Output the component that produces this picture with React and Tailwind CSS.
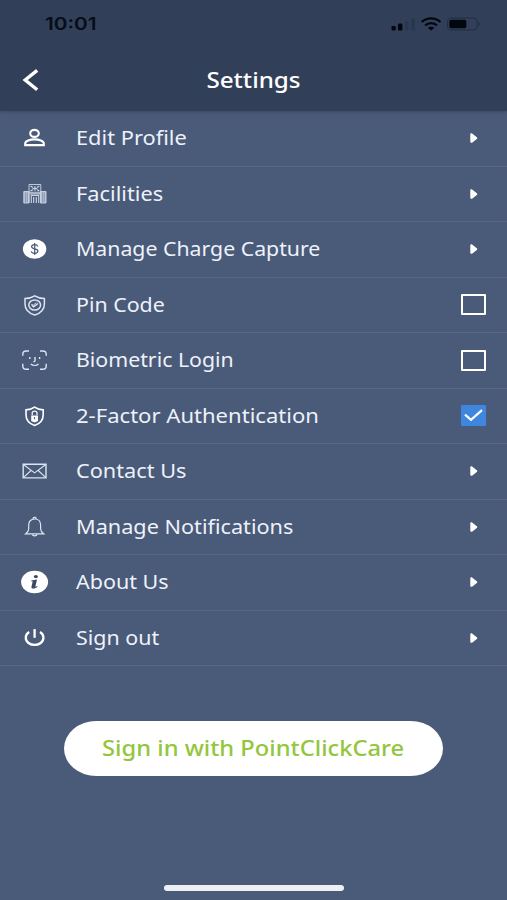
import { useState } from 'react'

const UserIcon = () => (
  <g strokeWidth="2.1">
    <ellipse cx="13.5" cy="7.4" rx="4.3" ry="3.5" />
    <path d="M4.2 19.1V17.5C4.2 14.9 9 13.4 13.5 13.4S22.8 14.9 22.8 17.5V19.1Z" />
  </g>
)

const HospitalIcon = () => (
  <g stroke="#cbd5e5" strokeWidth="0.9">
    <path d="M2.8 9.5H8V21H2.8ZM19.5 9.5H25V21H19.5Z" fill="#aeb9cc" />
    <path d="M8 21V2.5H19.8V21M8 10.3H19.8" />
    <path d="M9.5 4 12 5.5M18.3 4 15.8 5.5M9.5 9 12 7.5M18.3 9 15.8 7.5M13.9 4.2V8.8M11.6 6.5H16.2" strokeWidth="1.2" />
    <path d="M10.3 21V13.5H17.7V21M12.7 15V21M15.3 15V21M9 11.9H19" strokeWidth="1.1" />
    <path d="M4.5 10.5V20.5M6.3 10.5V20.5M21.5 10.5V20.5M23.3 10.5V20.5" stroke="#7d8aa5" strokeWidth="0.6" />
  </g>
)

const DollarIcon = () => (
  <g>
    <ellipse cx="13.6" cy="12" rx="11.7" ry="9.8" fill="#fff" stroke="none" />
    <path d="M16.7 9.5C16.4 8.3 15.2 7.7 13.7 7.7 11.9 7.7 10.6 8.5 10.6 9.8 10.6 12.6 16.9 11.3 16.9 14.1 16.9 15.5 15.5 16.3 13.7 16.3 11.9 16.3 10.6 15.6 10.3 14.3M13.7 6V18" stroke="#4a5a79" strokeWidth="1.2" />
  </g>
)

const ShieldCheckIcon = () => (
  <g stroke="#dce4f1" strokeWidth="1.5">
    <path d="M13.7 2.8C10.8 4.7 7.5 5.4 4 5.4V11C4 16.8 8 20.3 13.7 22 19.4 20.3 23.4 16.8 23.4 11V5.4C19.9 5.4 16.6 4.7 13.7 2.8Z" />
    <ellipse cx="13.7" cy="12" rx="5.9" ry="5.1" />
    <path d="M10.8 12.3 12.6 13.9 17 10.5" />
    <path d="M10.2 11.6 12.6 12 15.3 9.6" strokeWidth="0.9" />
  </g>
)

const FaceIcon = () => (
  <g stroke="#dce4f1" strokeWidth="1.4">
    <path d="M1.8 7.8V6.1C1.8 4 3.2 3 5.2 3H8M19 3H21.8C23.8 3 25.2 4 25.2 6.1V7.8M25.2 15.8V18C25.2 20.3 23.8 21.3 21.8 21.3H19M8 21.3H5.2C3.2 21.3 1.8 20.3 1.8 18V15.8" />
    <path d="M8.8 9V10.9M18.6 9V10.9M14 9V12.4C14 13.4 13.5 13.8 12.4 13.8M9.8 16C12 17.8 15.4 17.8 17.5 16" />
  </g>
)

const ShieldLockIcon = () => (
  <g strokeWidth="1.6">
    <path d="M13.6 3.2C11.2 5 8.2 5.8 5 5.9V10.7C5 16.1 8.4 19.7 13.6 21.4 18.8 19.7 22.2 16.1 22.2 10.7V5.9C19 5.8 16 5 13.6 3.2Z" />
    <path d="M11.2 11.2V9C11.2 6.4 16 6.4 16 9V11.2" strokeWidth="1.2" />
    <path d="M10.2 11.4H17V17L13.6 18.4 10.2 17Z" fill="#fff" stroke="none" />
    <path d="M13.6 13V15.3" stroke="#4a5a79" strokeWidth="1" />
  </g>
)

const MailIcon = () => (
  <g stroke="#dce4f1" strokeWidth="1.4">
    <path d="M2.2 5.3H25V18.9H2.2Z" />
    <path d="M2.4 5.5 13.6 13.9 24.8 5.5M2.4 18.7 10 11.5M24.8 18.7 17.2 11.5" strokeWidth="1.1" />
  </g>
)

const BellIcon = () => (
  <g stroke="#dce4f1" strokeWidth="1.2">
    <path d="M13.6 4C9.6 4 7.7 6.7 7.7 10V13.7C7.7 16 6.5 17.4 4.6 18.9H22.8C20.8 17.4 19.6 16 19.6 13.7V10C19.6 6.7 17.6 4 13.6 4Z" />
    <path d="M12.2 3.9V3.1C12.2 2 15 2 15 3.1V3.9M11.3 19.4C11.6 21.3 15.7 21.3 16 19.4" />
  </g>
)

const InfoIcon = () => (
  <g stroke="none">
    <ellipse cx="13.6" cy="12" rx="13.5" ry="11.3" fill="#fff" />
    <ellipse cx="14.9" cy="6.6" rx="2" ry="1.6" fill="#3b4865" />
    <path d="M10.3 10.4 16 9.6 14.4 16.2C14.2 17 15 16.8 16.2 15.9L16.6 16.7C14.5 18.6 9.7 19.7 10.5 16.4L11.7 11.5 10.2 11.3Z" fill="#3b4865" />
  </g>
)

const PowerIcon = () => (
  <g strokeWidth="2.3">
    <path d="M8.2 6C3.6 8.8 3.9 14.4 7.5 17 11 19.6 16.2 19.6 19.7 17 23.3 14.4 23.6 8.8 19 6" />
    <path d="M13.6 3.1V11.8" />
  </g>
)

const items = [
  { label: 'Edit Profile', icon: UserIcon, stretch: 'scale-x-[1.09]' },
  { label: 'Facilities', icon: HospitalIcon, stretch: 'scale-x-[1.09]' },
  { label: 'Manage Charge Capture', icon: DollarIcon, stretch: 'scale-x-[1.064]' },
  { label: 'Pin Code', icon: ShieldCheckIcon, stretch: 'scale-x-[1.067]', toggle: 'pin' },
  { label: 'Biometric Login', icon: FaceIcon, stretch: 'scale-x-[1.065]', toggle: 'biometric' },
  { label: '2-Factor Authentication', icon: ShieldLockIcon, stretch: 'scale-x-[1.103]', toggle: 'twoFactor' },
  { label: 'Contact Us', icon: MailIcon, stretch: 'scale-x-[1.085]' },
  { label: 'Manage Notifications', icon: BellIcon, stretch: 'scale-x-[1.083]' },
  { label: 'About Us', icon: InfoIcon, stretch: 'scale-x-[1.075]' },
  { label: 'Sign out', icon: PowerIcon, stretch: 'scale-x-[1.07]' },
]

function Checkbox({ checked, label, onChange }) {
  return (
    <button
      role="checkbox"
      aria-checked={checked}
      aria-label={label}
      onClick={onChange}
      className={`flex h-[21px] w-[25px] items-center justify-center rounded-[1px] ${
        checked ? 'bg-[#3f86e0]' : 'border-2 border-white'
      }`}
    >
      {checked && (
        <svg width="25" height="21" viewBox="0 0 25 21" fill="none" stroke="#fff" strokeWidth="2.2">
          <path d="M4 9.7 10 14.8 21 5.2" />
        </svg>
      )}
    </button>
  )
}

function StatusBar() {
  return (
    <div className="flex h-[47px] items-center justify-between pl-[45px] pr-[26px]">
      <span className="origin-left scale-x-[1.22] pt-px font-['Inter','Liberation_Sans',sans-serif] text-[17px] font-semibold leading-none text-[#060c18]">10:01</span>
      <svg width="90" height="14" viewBox="0 0 90 14" fill="none">
        <rect x="0.5" y="9" width="4.2" height="4.5" rx="1.2" fill="#02060e" />
        <rect x="7" y="6.5" width="4.4" height="7" rx="1.2" fill="#02060e" />
        <rect x="14" y="4" width="3.5" height="9.5" rx="1" fill="#293750" />
        <rect x="20.3" y="1.5" width="3.7" height="12" rx="1" fill="#293750" />
        <g stroke="#02060e" strokeWidth="2.3">
          <path d="M30.7 5C36.3 .2 43.9 .2 49.5 5" />
          <path d="M34.2 8.4C37.5 5.4 42.7 5.4 46 8.4" />
        </g>
        <path d="M36.8 10.8C38.7 9.3 41.5 9.3 43.4 10.8L40.1 13.6Z" fill="#02060e" />
        <rect x="56.5" y="1" width="29.5" height="12" rx="3.3" stroke="#202c42" />
        <rect x="58.3" y="2.8" width="17" height="8.4" rx="1.8" fill="#02060e" />
        <path d="M87.3 5V9C89 8.5 89 5.5 87.3 5Z" fill="#202c42" />
      </svg>
    </div>
  )
}

export default function App() {
  const [toggles, setToggles] = useState({ pin: false, biometric: false, twoFactor: true })

  const flip = (key) => setToggles((prev) => ({ ...prev, [key]: !prev[key] }))

  return (
    <div className="flex h-[900px] w-[507px] flex-col overflow-hidden bg-[#4a5a79] font-['Noto_Sans','Open_Sans',sans-serif] text-[#edf2fa]">
      {/* Header */}
      <header className="h-[111px] shrink-0 bg-[#323f59] shadow-[0_1px_3px_rgba(50,63,89,0.6)]">
        <StatusBar />
        <div className="grid h-[65px] grid-cols-[60px_1fr_60px] items-center">
          <button aria-label="Back" className="pl-[22px]">
            <svg width="18" height="24" viewBox="0 0 18 24" fill="none" stroke="#fff" strokeWidth="3.4">
              <path d="M15.2 2.4 3.2 12 15.2 21.8" />
            </svg>
          </button>
          <h1 className="scale-x-[1.1] pb-[2px] text-center text-[22px] font-medium leading-none text-white">Settings</h1>
        </div>
      </header>

      {/* Settings list */}
      <ul>
        {items.map(({ label, icon: Icon, stretch, toggle }) => (
          <li key={label} className="flex h-[55.5px] items-center border-b border-[#586785] pl-[21px] pr-[21px]">
            <svg width="28" height="24" viewBox="0 0 28 24" fill="none" stroke="#fff" className="shrink-0">
              <Icon />
            </svg>
            <span className={`ml-[26.5px] flex-1 origin-left whitespace-nowrap text-[20px] leading-none ${stretch}`}>{label}</span>
            {toggle ? (
              <Checkbox checked={toggles[toggle]} label={label} onChange={() => flip(toggle)} />
            ) : (
              <svg width="25" height="12" viewBox="0 0 25 12" fill="#fff">
                <path d="M9.3 2.6C9.3 1.3 10.4 1 11.4 1.8L15.8 5.3C16.5 5.9 16.5 6.3 15.8 6.9L11.4 10.4C10.4 11.2 9.3 10.8 9.3 9.6Z" />
              </svg>
            )}
          </li>
        ))}
      </ul>

      <button className="mx-auto mt-[55px] flex h-[55px] w-[379px] items-center justify-center rounded-[33px/28px] bg-white text-[#93c63d]">
        <span className="scale-x-[1.078] whitespace-nowrap pb-[3px] text-[22px] font-medium leading-none">Sign in with PointClickCare</span>
      </button>

      {/* Home indicator */}
      <div className="mx-auto mb-[9px] mt-auto h-[6px] w-[180px] rounded-full bg-[#eef0f3]" />
    </div>
  )
}
